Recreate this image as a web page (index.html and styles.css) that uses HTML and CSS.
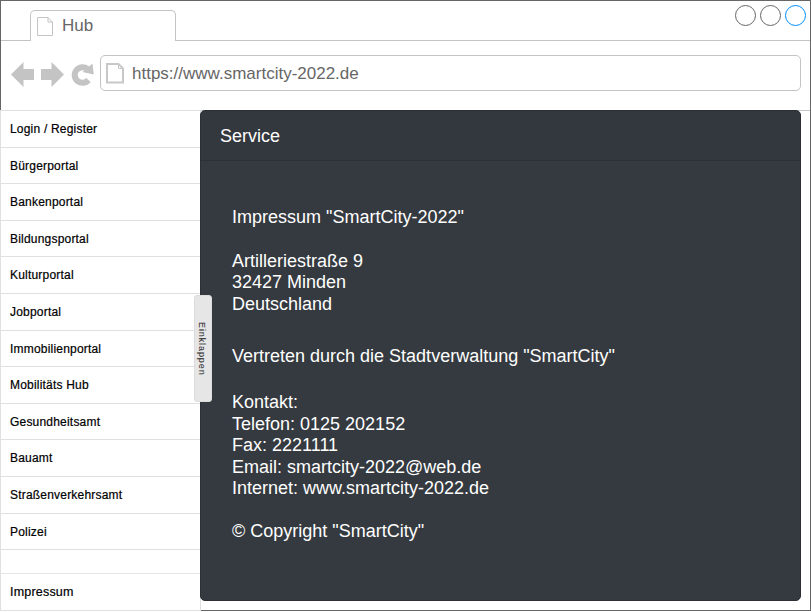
FILE: index.html
```html
<!DOCTYPE html>
<html lang="de">
<head>
<meta charset="utf-8">
<title>Hub</title>
<link rel="stylesheet" href="styles.css">
</head>
<body>
<div class="window">
  <header class="titlebar">
    <div class="tab">
      <svg class="tab-icon" width="17" height="20" viewBox="0 0 17 20"><path d="M.5.5H11L15.500 5V18.500H.5ZM11 .5V5H15.500" fill="none" stroke="#c4c4c4"/></svg>
      <span>Hub</span>
    </div>
    <div class="controls"><i></i><i></i><i class="active"></i></div>
  </header>
  <div class="toolbar">
    <svg class="nav" width="90" height="30" viewBox="0 0 90 30" fill="#c4c4c4">
      <path d="M1 14.500 13.500 2V9H24V20H13.500V27Z"/>
      <path d="M54 14.500 41.500 2V9H31V20H41.500V27Z"/>
      <path d="M78 9.500A7.800 7.800 0 1 0 78.500 20" fill="none" stroke="#c4c4c4" stroke-width="6"/>
      <path d="M82.500 3.500 83.800 14.400 72.500 11.900Z"/>
    </svg>
    <div class="address">
      <svg class="page-icon" width="18" height="21" viewBox="0 0 18 21"><path d="M1 1H12.500L17 5.500V19.500H1Z" fill="none" stroke="#c8c8c8" stroke-width="2"/><path d="M12.500 1V5.500H17" fill="none" stroke="#c8c8c8"/></svg>
      <span>https://www.smartcity-2022.de</span>
    </div>
  </div>
  <div class="body">
    <nav class="menu">
      <a>Login / Register</a>
      <a>Bürgerportal</a>
      <a>Bankenportal</a>
      <a>Bildungsportal</a>
      <a>Kulturportal</a>
      <a>Jobportal</a>
      <a>Immobilienportal</a>
      <a>Mobilitäts Hub</a>
      <a>Gesundheitsamt</a>
      <a>Bauamt</a>
      <a>Straßenverkehrsamt</a>
      <a>Polizei</a>
      <div class="gap"></div>
      <a class="last">Impressum</a>
      <button class="collapse">Einklappen</button>
    </nav>
    <main class="card">
      <h1>Service</h1>
      <div class="content">
        <p class="name">Impressum "SmartCity-2022"</p>
        <p class="street">Artilleriestraße 9<br>32427 Minden<br>Deutschland</p>
        <p class="agent">Vertreten durch die Stadtverwaltung "SmartCity"</p>
        <p class="contact">Kontakt:<br>Telefon: 0125 202152<br>Fax: 2221111<br>Email: smartcity-2022@web.de<br>Internet: www.smartcity-2022.de</p>
        <p>© Copyright "SmartCity"</p>
      </div>
    </main>
  </div>
</div>
</body>
</html>
```
FILE: styles.css
```css
* { box-sizing: border-box; }
body { margin: 0; background: #fff; font-family: "Liberation Sans", Arial, sans-serif; overflow: hidden; }
.window { width: 811px; height: 611px; border: 1px solid #666; display: flex; flex-direction: column; }
.titlebar { height: 40px; flex: none; border-bottom: 1px solid #c4c4c4; display: flex; justify-content: space-between; }
.tab { width: 146px; height: 31px; margin: 9px 0 0 29px; border: 1px solid #c4c4c4; border-bottom: 0; border-radius: 5px 5px 0 0; background: #fff; display: flex; color: #666; font-size: 17px; line-height: 30px; }
.tab-icon { margin: 6px 8px 0 6px; }
.controls { display: flex; gap: 4px; margin: 4px 4px 0 0; }
.controls i { width: 21px; height: 21px; border: 1px solid #666; border-radius: 50%; }
.controls .active { border-color: #008cff; }
.toolbar { height: 69px; flex: none; display: flex; padding: 14px 9px 0 9px; }
.nav { flex: none; margin-top: 5px; }
.address { flex: 1; height: 36px; border: 1px solid #c4c4c4; border-radius: 5px; display: flex; color: #666; font-size: 17px; line-height: 35px; }
.page-icon { margin: 7px 8px 0 5px; }
.body { display: flex; height: 501px; flex: none; margin-left: -1px; border-top: 1px solid #c4c4c4; }
.menu { position: relative; z-index: 2; width: 201px; height: 501px; flex: none; margin: -1px -1px 0 0; background: #fff; border: 1px solid #e0e0e0; }
.menu a { display: block; height: 36.620px; border-bottom: 1px solid #e0e0e0; padding-left: 9px; color: #000; font-size: 12px; line-height: 36px; letter-spacing: .2px; -webkit-text-stroke: .2px #000; }
.menu .gap { height: 24px; border-bottom: 1px solid #e6e6e6; }
.menu .last { height: 36px; border-bottom: 0; font-size: 12.500px; line-height: 37px; }
.collapse { position: absolute; left: 193px; top: 184px; width: 18px; height: 107px; padding: 0 2px 0 0; border: 1px solid #dcdcdc; border-radius: 3px; background: #e6e6e6; color: #222; font: 9px/12px "Liberation Sans", sans-serif; letter-spacing: .9px; writing-mode: vertical-rl; text-align: center; }
.card { position: relative; z-index: 2; width: 601px; height: 491px; margin-top: -1px; flex: none; background: #353a40; border: 1px solid #2c3034; border-radius: 5px; color: #fff; }
.card h1 { margin: 0; height: 50px; padding-left: 19px; background: #33373e; border-bottom: 1px solid #2c3034; font-size: 18px; font-weight: 400; line-height: 50px; border-radius: 4px 4px 0 0; }
.content { padding: 46px 31px 0; font-size: 18px; line-height: 21.600px; }
.content p { margin: 0; }
.content .name { margin-bottom: 22px; }
.content .street { margin-bottom: 31px; }
.content .agent { margin-bottom: 24px; }
.content .contact { margin-bottom: 21px; }
.menu { z-index: auto; }
.collapse { z-index: 3; }
```
